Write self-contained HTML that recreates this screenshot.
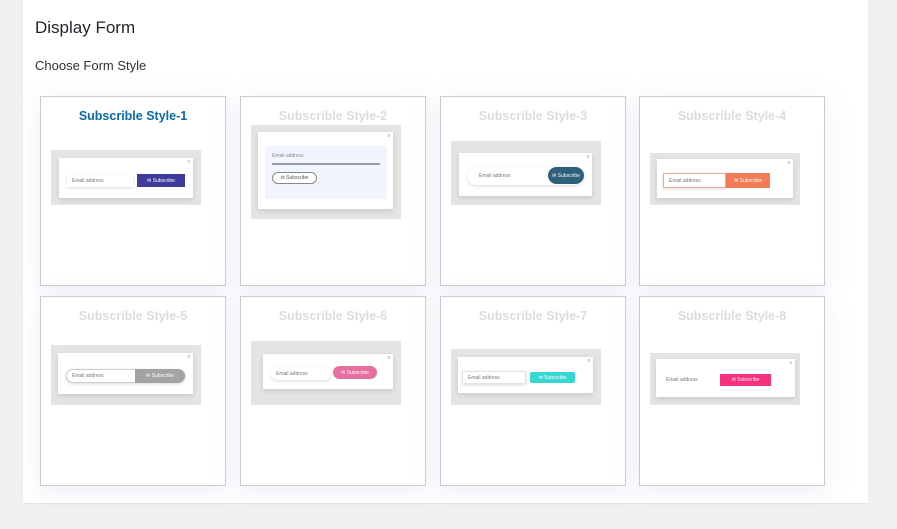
<!DOCTYPE html>
<html><head><meta charset="utf-8"><style>
*{box-sizing:border-box;margin:0;padding:0}
body{width:897px;height:529px;background:#f0f0f1;font-family:"Liberation Sans",sans-serif;position:relative;overflow:hidden}
.panel{position:absolute;left:23px;top:0;width:845px;height:503px;background:#fff;box-shadow:0 1px 1px rgba(0,0,0,.06)}
h2{position:absolute;left:35px;top:18px;font-size:17px;font-weight:normal;color:#1d2327}
h3{position:absolute;left:35px;top:58px;font-size:13px;font-weight:normal;color:#2c3338}
.card{position:absolute;width:186px;height:190px;background:#fff;border:1px solid #c8cbd0;box-shadow:0 6px 22px rgba(200,210,230,.35)}
.t{position:absolute;left:0;right:0;top:12px;text-align:center;font-weight:bold;font-size:12.5px;color:#dcdcdc}
.t.a{color:#0a6aa8}
.g{position:absolute;background:#e4e4e4}
.w{position:absolute;background:#fff;box-shadow:0 2px 5px rgba(0,0,0,.12)}
.x{position:absolute;right:3px;top:1px;font-size:5px;color:#999}
.in{position:absolute;background:#fff;font-size:5px;color:#777;padding-left:5px;display:flex;align-items:center;box-shadow:0 1px 3px rgba(0,0,0,.15)}
.bt{position:absolute;font-size:5px;color:#fff;display:flex;align-items:center;justify-content:center}
</style></head><body>
<div class="panel"></div>
<h2>Display Form</h2>
<h3>Choose Form Style</h3>

<div class="card" style="left:40px;top:96px"><div class="t a">Subscrible Style-1</div>
<div class="g" style="left:10px;top:53px;width:150px;height:55px"><div class="w" style="left:8px;top:8px;width:134px;height:40px"><span class="x">x</span>
<div class="in" style="left:8px;top:17px;width:66px;height:12px">Email address</div>
<div class="bt" style="left:78px;top:16px;width:48px;height:13px;background:#3f3b9b">✉ Subscribe</div></div></div></div>

<div class="card" style="left:240px;top:96px"><div class="t">Subscrible Style-2</div>
<div class="g" style="left:10px;top:28px;width:150px;height:94px"><div class="w" style="left:7px;top:7px;width:135px;height:77px"><span class="x">x</span>
<div style="position:absolute;left:7px;top:14px;width:122px;height:53px;background:#f1f5fd"></div>
<div style="position:absolute;left:14px;top:21px;font-size:5px;color:#888">Email address</div>
<div style="position:absolute;left:14px;top:31px;width:108px;height:2px;background:#9a9ca8"></div>
<div class="bt" style="left:14px;top:40px;width:45px;height:12px;border:1px solid #888;border-radius:6px;background:#fff;color:#555">✉ Subscribe</div></div></div></div>

<div class="card" style="left:440px;top:96px"><div class="t">Subscrible Style-3</div>
<div class="g" style="left:10px;top:44px;width:150px;height:64px"><div class="w" style="left:8px;top:12px;width:133px;height:43px"><span class="x">x</span>
<div class="in" style="left:8px;top:14px;width:117px;height:18px;border-radius:9px;padding-left:12px">Email address</div>
<div class="bt" style="left:89px;top:14px;width:36px;height:17px;border-radius:9px;background:#2e607c">✉ Subscribe</div></div></div></div>

<div class="card" style="left:639px;top:96px"><div class="t">Subscrible Style-4</div>
<div class="g" style="left:10px;top:56px;width:150px;height:52px"><div class="w" style="left:7px;top:6px;width:136px;height:39px"><span class="x">x</span>
<div class="in" style="left:6px;top:14px;width:63px;height:15px;border:1px solid #f2a88e">Email address</div>
<div class="bt" style="left:69px;top:14px;width:44px;height:15px;background:#f27c56">✉ Subscribe</div></div></div></div>

<div class="card" style="left:40px;top:296px"><div class="t">Subscrible Style-5</div>
<div class="g" style="left:10px;top:48px;width:150px;height:60px"><div class="w" style="left:7px;top:8px;width:135px;height:41px"><span class="x">x</span>
<div class="in" style="left:8px;top:16px;width:119px;height:14px;border-radius:7px;border:1px solid #ccc">Email address</div>
<div class="bt" style="left:77px;top:16px;width:50px;height:14px;border-radius:0 7px 7px 0;background:#a3a3a3">✉ Subscribe</div></div></div></div>

<div class="card" style="left:240px;top:296px"><div class="t">Subscrible Style-6</div>
<div class="g" style="left:10px;top:44px;width:150px;height:64px"><div class="w" style="left:12px;top:13px;width:130px;height:35px"><span class="x">x</span>
<div class="in" style="left:8px;top:13px;width:60px;height:13px;border-radius:6px">Email address</div>
<div class="bt" style="left:70px;top:12px;width:44px;height:13px;border-radius:7px;background:#e66fa0">✉ Subscribe</div></div></div></div>

<div class="card" style="left:440px;top:296px"><div class="t">Subscrible Style-7</div>
<div class="g" style="left:10px;top:52px;width:150px;height:56px"><div class="w" style="left:7px;top:8px;width:135px;height:36px"><span class="x">x</span>
<div class="in" style="left:4px;top:14px;width:64px;height:13px;border:1px solid #e4e4e4">Email address</div>
<div class="bt" style="left:72px;top:15px;width:45px;height:11px;border-radius:2px;background:#36d6d3">✉ Subscribe</div></div></div></div>

<div class="card" style="left:639px;top:296px"><div class="t">Subscrible Style-8</div>
<div class="g" style="left:10px;top:56px;width:150px;height:52px"><div class="w" style="left:6px;top:6px;width:139px;height:38px"><span class="x">x</span>
<div class="in" style="left:5px;top:15px;width:59px;height:12px;box-shadow:none">Email address</div>
<div class="bt" style="left:64px;top:15px;width:51px;height:12px;background:#f5307f">✉ Subscribe</div></div></div></div>
</body></html>
